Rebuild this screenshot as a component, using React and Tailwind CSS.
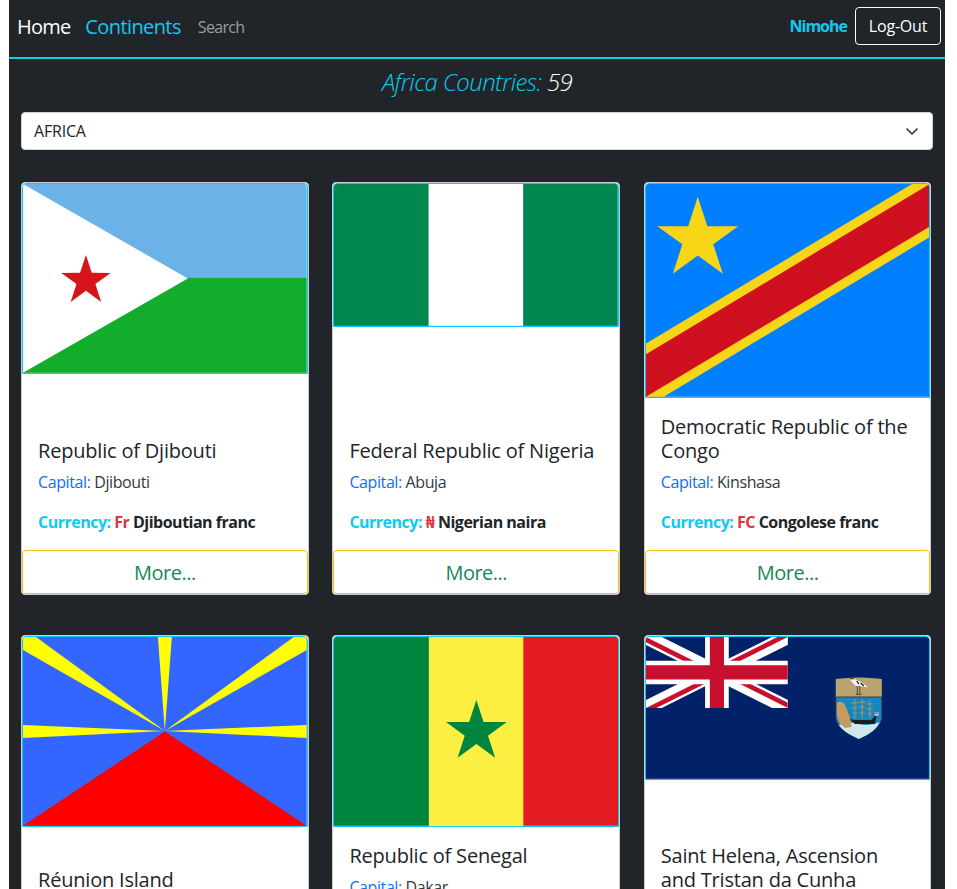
import React from 'react';

const starPoints = (cx, cy, r) => {
  const pts = [];
  for (let i = 0; i < 10; i++) {
    const rad = i % 2 === 0 ? r : r * 0.382;
    const a = (Math.PI / 5) * i - Math.PI / 2;
    pts.push(`${(cx + rad * Math.cos(a)).toFixed(2)},${(cy + rad * Math.sin(a)).toFixed(2)}`);
  }
  return pts.join(' ');
};

const Djibouti = () => (
  <svg viewBox="0 0 284 189" className="block w-full">
    <rect width="284" height="95" fill="#6ab2e7" />
    <rect y="94" width="284" height="95" fill="#12ad2b" />
    <polygon points="0,0 165,94.5 0,189" fill="#fff" />
    <polygon points={starPoints(63, 97, 26)} fill="#d7141a" />
  </svg>
);

const Nigeria = () => (
  <svg viewBox="0 0 3 1.5" className="block w-full">
    <rect width="3" height="1.5" fill="#008751" />
    <rect x="1" width="1" height="1.5" fill="#fff" />
  </svg>
);

const Congo = () => (
  <svg viewBox="0 0 800 600" className="block w-full">
    <rect width="800" height="600" fill="#007fff" />
    <path d="M0 450 750 0H800V150L50 600H0z" fill="#f7d618" />
    <path d="M0 480 800 0V120L0 600z" fill="#ce1021" />
    <polygon points={starPoints(146, 156, 120)} fill="#f7d618" />
  </svg>
);

const Reunion = () => (
  <svg viewBox="0 0 284 189" className="block w-full">
    <rect width="284" height="189" fill="#3366ff" />
    <polygon points="0,189 142,94.5 284,189" fill="#ff0000" />
    <g fill="#ffff00">
      <polygon points="135,0 149,0 142,94" />
      <polygon points="0,0 13,0 142,94 0,13" />
      <polygon points="284,0 271,0 142,94 284,13" />
      <polygon points="0,88 142,94 0,101" />
      <polygon points="284,88 142,94 284,101" />
    </g>
  </svg>
);

const Senegal = () => (
  <svg viewBox="0 0 284 189" className="block w-full">
    <rect width="95" height="189" fill="#00853f" />
    <rect x="95" width="95" height="189" fill="#fdef42" />
    <rect x="189.5" width="95" height="189" fill="#e31b23" />
    <polygon points={starPoints(142.5, 95, 32)} fill="#00853f" />
  </svg>
);

const SaintHelena = () => (
  <svg viewBox="0 0 284 142" className="block w-full">
    <rect width="284" height="142" fill="#012169" />
    <svg x="0" y="0" width="142" height="71" viewBox="0 0 60 30">
      <clipPath id="jack-diagonals">
        <path d="M30 15H60V30ZV30H0ZH0V0ZV0H60Z" />
      </clipPath>
      <path d="M0 0 60 30M60 0 0 30" stroke="#fff" strokeWidth="6" />
      <path d="M0 0 60 30M60 0 0 30" stroke="#c8102e" strokeWidth="4" clipPath="url(#jack-diagonals)" />
      <path d="M30 0V30M0 15H60" stroke="#fff" strokeWidth="10" />
      <path d="M30 0V30M0 15H60" stroke="#c8102e" strokeWidth="6" />
    </svg>
    {/* shield */}
    <path d="M190 42Q213 39 236 42V82Q233 94 213 102Q193 94 190 82Z" fill="#1787c2" stroke="#2b2b2b" strokeWidth="0.5" />
    <path d="M190 42Q213 39 236 42V60H190Z" fill="#b8a46c" />
    <path d="M190.5 60H235.5" stroke="#222" strokeWidth="0.7" />
    <path d="M193 88Q203 84 213 87T234 85Q230 95 213 102Q197 95 193 88Z" fill="#cfe8ec" />
    <path d="M191 66 194 64.5 198 66 201 72 204 80 206 90 199 91 193 85 191 78Z" fill="#c79a5e" />
    <path d="M204 82 208 83H226L228 80 231 79 229 87H209Z" fill="#1c1c1c" />
    <path d="M209 62V82M216.5 62V82M224 63V81M205.5 66H212.5M213 65H220M220.5 67H227.5M206 71H212M213.5 70H219.5M221 72H227M207 76H211.5M214 76H219M222 77H226" stroke="#b0935a" strokeWidth="1" fill="none" />
    <rect x="229" y="75.5" width="4" height="3" fill="#f0c8c8" />
    <path d="M229.5 76.5H232.5" stroke="#c8102e" strokeWidth="0.8" />
    <path d="M203 41.5H207L211 43 217 46 222 50.5 216 49.5 210 49 207 46Z" fill="#f0f0f0" />
    <path d="M204 41.8H208M211 44 213 47M215 46 218 49" stroke="#1c1c1c" strokeWidth="1.2" />
    <path d="M211.5 49V57M214 49V57M210 57.5H216" stroke="#333" strokeWidth="0.8" />
  </svg>
);

const countries = [
  { name: 'Republic of Djibouti', capital: 'Djibouti', symbol: 'Fr', currency: 'Djiboutian franc', Flag: Djibouti },
  { name: 'Federal Republic of Nigeria', capital: 'Abuja', symbol: '₦', currency: 'Nigerian naira', Flag: Nigeria },
  { name: 'Democratic Republic of the Congo', capital: 'Kinshasa', symbol: 'FC', currency: 'Congolese franc', Flag: Congo },
  { name: 'Réunion Island', capital: 'Saint-Denis', symbol: '€', currency: 'Euro', Flag: Reunion },
  { name: 'Republic of Senegal', capital: 'Dakar', symbol: 'Fr', currency: 'West African CFA franc', Flag: Senegal },
  { name: 'Saint Helena, Ascension and Tristan da Cunha', capital: 'Jamestown', symbol: '£', currency: 'Saint Helena pound', Flag: SaintHelena },
];

const CountryCard = ({ country }) => {
  const { Flag } = country;
  return (
    <div className="flex flex-col bg-white border border-[#c9ccd0] rounded">
      <div className="border border-[#0dcaf0] rounded-t overflow-hidden">
        <Flag />
      </div>
      <div className="mt-auto p-4">
        <h5 className="mt-px mb-[7px] text-[20px] leading-6 font-medium tracking-[-0.2px] text-[#212529]">{country.name}</h5>
        <p className="mb-4 text-base leading-6 tracking-[-0.4px] text-[#33383d]">
          <span className="text-[#0d6efd]">Capital:</span> {country.capital}
        </p>
        <p className="text-base leading-6 font-bold tracking-[-0.5px] text-[#212529]">
          <span className="text-[#0dcaf0]">Currency:</span> <span className="text-[#dc3545]">{country.symbol}</span> {country.currency}
        </p>
      </div>
      <button className="h-11 pt-[3px] border border-[#ffc107] rounded text-xl tracking-[-0.5px] text-[#198754]">More...</button>
    </div>
  );
};

const App = () => {
  return (
    <div className="h-[889px] overflow-hidden bg-white" style={{ fontFamily: '"Open Sans", "Noto Sans", sans-serif' }}>
      <div className="ml-[9px] w-[936px] min-h-full bg-[#212529]">
        {/* Navbar */}
        <nav className="flex items-center justify-between h-[59px] pb-[5px] pl-2 pr-1 border-b-2 border-[#0dcaf0]">
          <div className="flex items-center gap-[15px] pt-[2px]">
            <a className="text-xl tracking-[-0.8px] text-white">Home</a>
            <a className="text-xl tracking-[-0.6px] text-[#0dcaf0]">Continents</a>
            <a className="ml-[2px] text-base tracking-[-0.7px] text-[#9a9c9e]">Search</a>
          </div>
          <div className="flex items-center gap-2">
            <span className="text-base font-bold tracking-[-1px] text-[#0dcaf0]">Nimohe</span>
            <button className="h-[38px] w-[86px] border border-[#f8f9fa] rounded text-base tracking-[-0.2px] text-white">Log-Out</button>
          </div>
        </nav>

        <div className="px-3">
          <h4 className="pt-2 mb-4 text-center text-2xl leading-[29px] italic font-light tracking-[-0.6px] text-[#0dcaf0]">
            Africa Countries: <span className="text-white">59</span>
          </h4>

          <div className="flex items-center justify-between h-[38px] px-3 mb-8 bg-white border border-[#ced4da] rounded text-base tracking-[-0.2px] text-[#212529]">
            <span>AFRICA</span>
            <svg viewBox="0 0 16 16" className="w-4 h-4" fill="none" stroke="#343a40" strokeWidth="1.7" strokeLinecap="round" strokeLinejoin="round">
              <path d="m3 6 5 5 5-5" />
            </svg>
          </div>

          <div className="grid grid-cols-3 gap-x-[23.67px] gap-y-10 mr-[1.5px]">
            {countries.map(c => (
              <CountryCard key={c.name} country={c} />
            ))}
          </div>
        </div>
      </div>
    </div>
  );
};

export default App;
